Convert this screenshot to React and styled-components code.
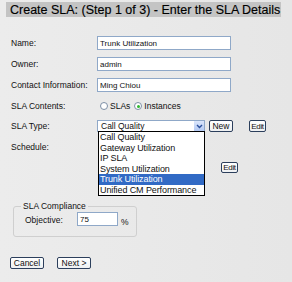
import React from "react";
import styled, { createGlobalStyle } from "styled-components";

const Global = createGlobalStyle`
  html, body { margin: 0; padding: 0; }
  body {
    width: 292px; height: 282px; overflow: hidden;
    background: linear-gradient(to right, #ececec, #e6e6e6);
    font-family: "Liberation Sans", Arial, sans-serif;
    font-size: 8.5px; color: #111;
  }
`;

const Page = styled.div`
  position: relative;
  padding-top: 2px;
`;

const Header = styled.div`
  margin: 0 11px 0 6px;
  height: 15px;
  background: #c4c4c4;
  display: flex;
  align-items: center;
  padding-left: 4px;
  font-size: 12.5px;
  color: #000;
  white-space: nowrap;
  -webkit-text-stroke: 0.15px #000;
`;

const Form = styled.div`
  display: grid;
  grid-template-columns: 86px auto;
  row-gap: 7px;
  margin: 19px 0 0 11px;
  align-items: center;
`;

const Label = styled.div`
  font-size: 8.5px;
  align-self: ${(p) => (p.$top ? "start" : "center")};
  margin-top: ${(p) => (p.$top ? "3px" : "0")};
`;

const TextBox = styled.div`
  box-sizing: border-box;
  width: ${(p) => p.$w || 134}px;
  height: 14px;
  border: 1px solid #8fa8c8;
  background: #fff;
  padding-left: 2px;
  display: flex;
  align-items: center;
  font-size: 8px;
`;

const Radios = styled.div`
  display: flex;
  align-items: center;
  height: 14px;
  padding-left: 3px;
  font-size: 8.5px;
`;

const Radio = styled.span`
  box-sizing: border-box;
  width: 8px; height: 8px;
  border-radius: 50%;
  border: 1px solid #7d8fa6;
  background: #fff;
  margin-right: 2px;
  margin-left: ${(p) => p.$ml || 0}px;
  display: flex; align-items: center; justify-content: center;
  &::after {
    content: "";
    width: 3px; height: 3px; border-radius: 50%;
    background: ${(p) => (p.$on ? "#2fb82f" : "transparent")};
  }
`;

const TypeRow = styled.div`
  display: flex;
  align-items: center;
  position: relative;
`;

const Select = styled.div`
  box-sizing: border-box;
  width: 108px; height: 12px;
  border: 1px solid #8fa8c8;
  background: #fff;
  display: flex; align-items: center;
  padding-left: 3px;
  font-size: 8.5px;
  position: relative;
`;

const Arrow = styled.span`
  position: absolute;
  right: 0px; top: 0px;
  width: 10px; height: 10px;
  background: linear-gradient(#dbe6fb, #b3c9f3);
  display: flex; align-items: center; justify-content: center;
`;

const Btn = styled.div`
  box-sizing: border-box;
  height: ${(p) => p.$h || 12}px;
  padding: 0 ${(p) => (p.$tight ? 1 : 2)}px;
  min-width: ${(p) => p.$w || 0}px;
  border: 1px solid #2c3f5c;
  border-radius: 2px;
  background: linear-gradient(#ffffff, #eef0f2);
  display: inline-flex; align-items: center; justify-content: center;
  font-size: ${(p) => (p.$tight ? 8 : 8.5)}px;
  letter-spacing: ${(p) => (p.$tight ? "-0.3px" : "0")};
  margin-left: ${(p) => p.$ml || 0}px;
`;

const ScheduleBox = styled.div`
  height: 34px;
  display: flex;
  align-items: flex-end;
  padding-left: 124px;
`;

const DropList = styled.div`
  position: absolute;
  left: 1px; top: 11px;
  width: 107px;
  box-sizing: border-box;
  border: 1px solid #000;
  background: #fff;
  z-index: 2;
`;

const Opt = styled.div`
  height: 10.5px;
  line-height: 10.5px;
  padding-left: 1px;
  font-size: 9px;
  white-space: nowrap;
  letter-spacing: -0.1px;
  background: ${(p) => (p.$sel ? "#316ac5" : "transparent")};
  color: ${(p) => (p.$sel ? "#fff" : "#111")};
`;

const Fieldset = styled.fieldset`
  margin: 28px 0 0 13px;
  width: 124px;
  height: 36px;
  box-sizing: border-box;
  border: 1px solid #cfcfcf;
  border-radius: 3px;
  padding: 1px 0 0 11px;
  display: flex;
  align-items: flex-start;
`;

const Legend = styled.legend`
  font-size: 8.5px;
  padding: 0 2px;
  margin-left: -4px;
`;

const ObjLabel = styled.span`
  width: 52px;
  margin-top: 3px;
`;

const Pct = styled.span`
  margin-left: 3px;
  margin-top: 5px;
`;

const Buttons = styled.div`
  display: flex;
  margin: 20px 0 0 10px;
  gap: 13px;
`;

const options = [
  "Call Quality",
  "Gateway Utilization",
  "IP SLA",
  "System Utilization",
  "Trunk Utilization",
  "Unified CM Performance",
];

export default function App() {
  return (
    <Page>
      <Global />
      <Header>Create SLA: (Step 1 of 3) - Enter the SLA Details</Header>
      <Form>
        <Label>Name:</Label>
        <TextBox>Trunk Utilization</TextBox>
        <Label>Owner:</Label>
        <TextBox>admin</TextBox>
        <Label>Contact Information:</Label>
        <TextBox>Ming Chiou</TextBox>
        <Label>SLA Contents:</Label>
        <Radios>
          <Radio />
          SLAs
          <Radio $on $ml={4} />
          Instances
        </Radios>
        <Label>SLA Type:</Label>
        <TypeRow>
          <Select>
            Call Quality
            <Arrow>
              <svg width="7" height="5" viewBox="0 0 7 5">
                <path d="M1 1 L3.5 3.5 L6 1" fill="none" stroke="#2a4f9a" strokeWidth="1.4" />
              </svg>
            </Arrow>
          </Select>
          <Btn $ml={4} $w={24}>New</Btn>
          <Btn $ml={16} $w={17} $tight>Edit</Btn>
          <DropList>
            {options.map((o) => (
              <Opt key={o} $sel={o === "Trunk Utilization"}>{o}</Opt>
            ))}
          </DropList>
        </TypeRow>
        <Label $top>Schedule:</Label>
        <ScheduleBox>
          <Btn $h={11} $w={17} $tight>Edit</Btn>
        </ScheduleBox>
      </Form>
      <Fieldset>
        <Legend>SLA Compliance</Legend>
        <ObjLabel>Objective:</ObjLabel>
        <TextBox $w={41}>75</TextBox>
        <Pct>%</Pct>
      </Fieldset>
      <Buttons>
        <Btn $w={34}>Cancel</Btn>
        <Btn $w={34}>Next &gt;</Btn>
      </Buttons>
    </Page>
  );
}
